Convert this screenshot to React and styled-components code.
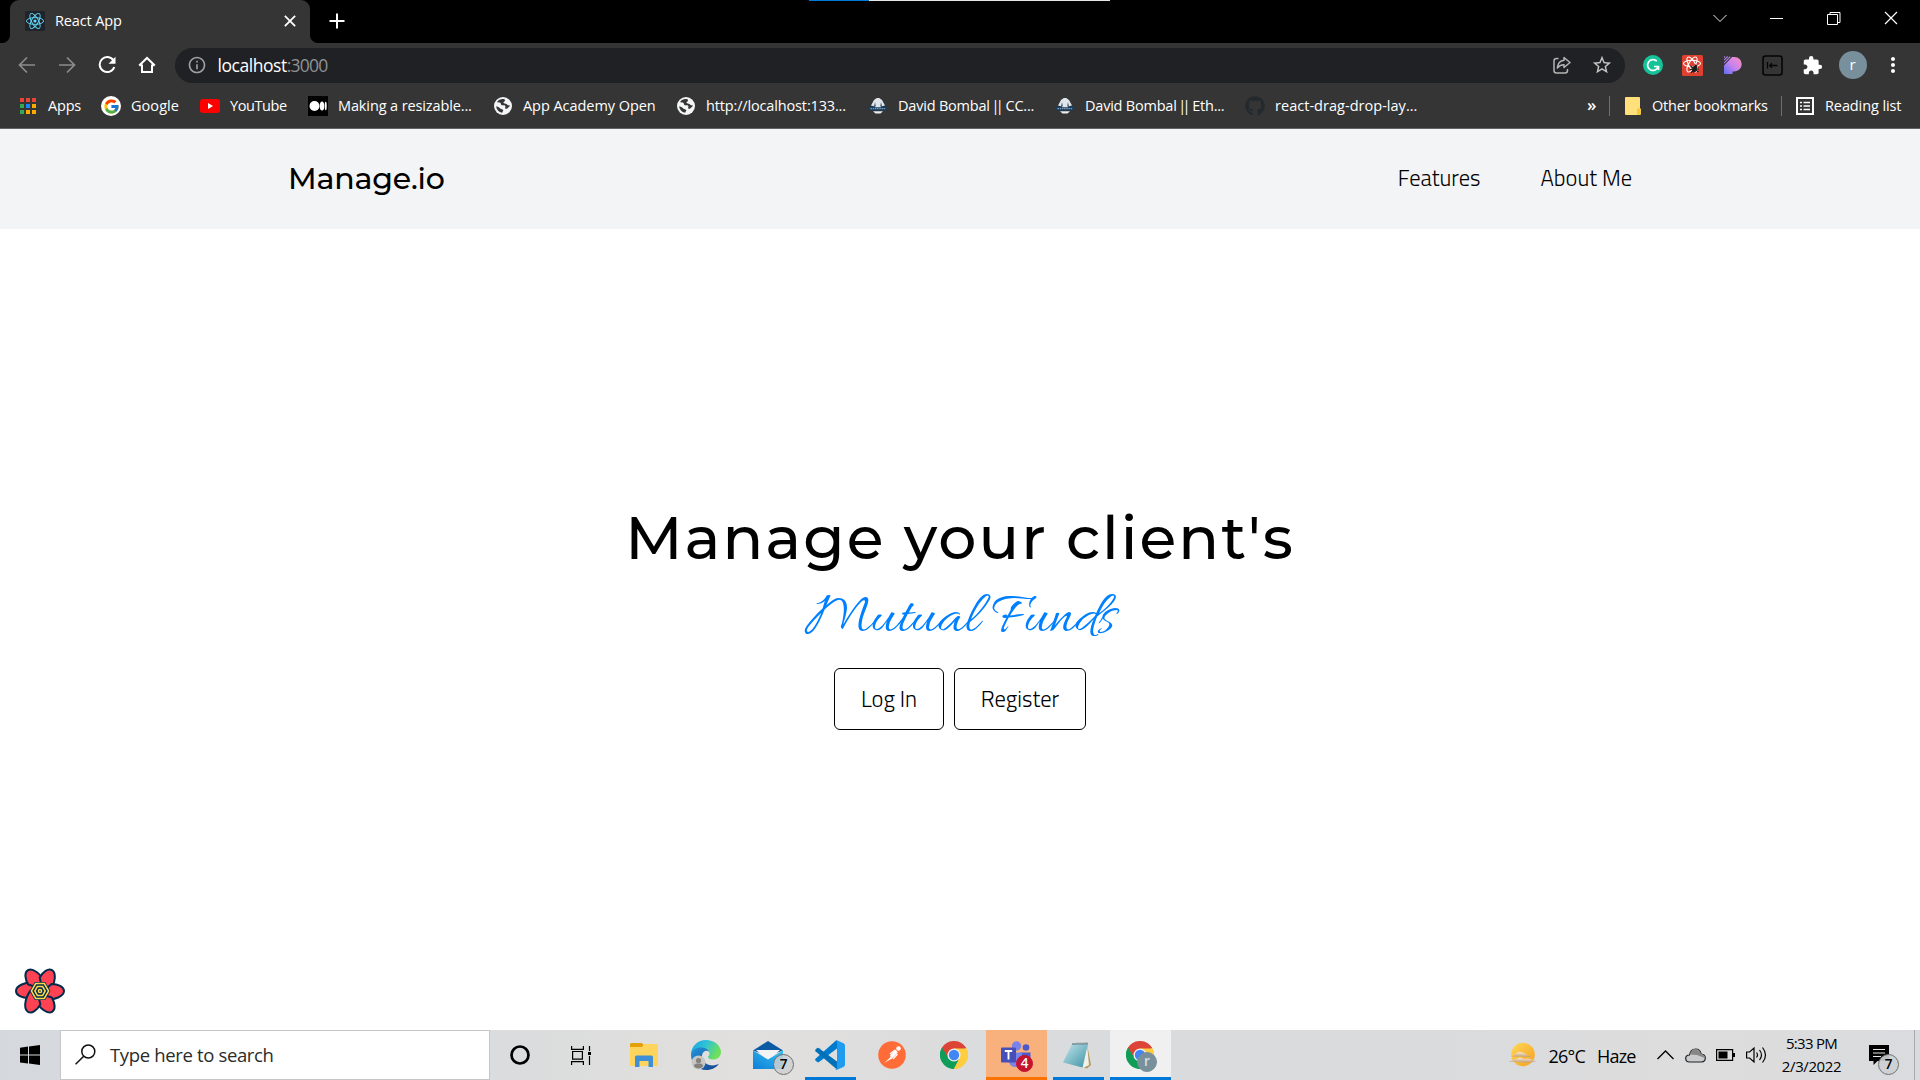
import React from "react";
import styled, { createGlobalStyle } from "styled-components";
import { FaGithub } from "react-icons/fa";
import { FcGoogle } from "react-icons/fc";
import { MdExtension, MdMoreVert, MdStarBorder, MdInfoOutline } from "react-icons/md";

const GlobalStyle = createGlobalStyle`
  * { box-sizing: border-box; }
  body { margin: 0; background: #fff; font-family: "Open Sans", "Noto Sans", sans-serif; overflow: hidden; }
  svg { display: block; flex: none; }
`;

const Screen = styled.div`
  display: flex;
  flex-direction: column;
  width: 1920px;
  height: 1080px;
  overflow: hidden;
`;

/* ---------- browser chrome ---------- */
const TabStrip = styled.div`
  position: relative;
  display: flex;
  height: 43px;
  padding-left: 2px;
  background: #000;
`;
const WindowEdge = styled.div`
  position: absolute;
  top: 0;
  left: 809px;
  width: 301px;
  height: 1px;
  background: linear-gradient(90deg, #0078d7 60px, #e6e6e3 60px);
`;
const TabFoot = styled.div`
  align-self: flex-end;
  width: 8px;
  height: 8px;
  background: radial-gradient(circle at ${(p) => (p.$right ? "100%" : "0")} 0, #000 7.5px, #353535 8.5px);
`;
const Tab = styled.div`
  display: flex;
  align-items: center;
  width: 300px;
  height: 43px;
  padding: 0 15px 1px;
  border-radius: 9px 9px 0 0;
  background: #353535;
`;
const TabTitle = styled.span`
  flex: 1;
  margin-left: 10px;
  color: #fff;
  font-size: 14.5px;
  line-height: 20px;
  letter-spacing: -0.12px;
`;
const CloseGlyph = styled.span`
  display: flex;
  margin-right: -0.5px;
`;
const NewTab = styled.div`
  display: flex;
  padding: 13px 0 0 11px;
`;
const WindowControls = styled.div`
  display: flex;
  margin-left: auto;
  padding-right: 1px;
`;
const WindowButton = styled.div`
  display: flex;
  justify-content: center;
  width: 57px;
  padding-top: 11px;
`;

const Toolbar = styled.div`
  display: flex;
  align-items: center;
  height: 45px;
  padding: 0 7.5px 1px 7px;
  background: #353535;
`;
const ToolSlot = styled.div`
  display: flex;
  align-items: center;
  justify-content: center;
  width: 40px;
  height: 35px;
  color: ${(p) => (p.$dim ? "#8c8c8c" : "#fff")};
`;
const AddressBar = styled.div`
  display: flex;
  flex: 1;
  align-items: center;
  height: 35px;
  margin: 0 7.5px 0 8px;
  padding: 0 3px 0 12px;
  border-radius: 18px;
  background: #202124;
  color: #9aa0a6;
`;
const Url = styled.span`
  flex: 1;
  margin-left: 10.5px;
  color: #8f9296;
  font-size: 17.5px;
  line-height: 24px;
  letter-spacing: -0.8px;
`;
const UrlHost = styled.span`
  color: #fff;
  letter-spacing: -0.45px;
`;
const Avatar = styled.div`
  display: flex;
  align-items: center;
  justify-content: center;
  width: 28px;
  height: 28px;
  border-radius: 50%;
  background: #78909c;
  color: #fff;
  font-size: 15px;
  line-height: 1;
  padding-bottom: 2px;
`;

const Bookmarks = styled.div`
  display: flex;
  align-items: center;
  height: 41px;
  padding: 0 18px 4px 18px;
  border-bottom: 1px solid #646464;
  background: #353535;
`;
const Bookmark = styled.div`
  display: flex;
  align-items: center;
  width: ${(p) => p.$width}px;
  color: #fff;
  font-size: 14.5px;
  line-height: 20px;
  letter-spacing: ${(p) => p.$tracking || 0}px;
  white-space: pre;
`;
const Bars = styled.span`
  margin-left: -2px;
  margin-right: 2px;
  letter-spacing: -3.7px;
`;
const BookmarkIcon = styled.div`
  display: flex;
  align-items: center;
  justify-content: center;
  width: 20px;
  height: 20px;
  margin-right: 10px;
  border-radius: ${(p) => (p.$round ? "50%" : "0")};
  background: ${(p) => p.$bg || "transparent"};
  color: #24292e;
`;
const BookmarksEnd = styled.div`
  display: flex;
  align-items: center;
  margin-left: auto;
`;
const Divider = styled.div`
  width: 1px;
  height: 20px;
  background: #6f6f6f;
`;
const Overflow = styled.span`
  width: 22px;
  color: #fff;
  font-size: 17px;
  font-weight: 600;
  line-height: 18px;
  padding-bottom: 3px;
`;
const EndItem = styled(Bookmark)`
  margin-left: ${(p) => p.$gap}px;
  svg { margin-right: 11px; }
`;

/* ---------- web page ---------- */
const SiteHeader = styled.header`
  display: flex;
  align-items: center;
  justify-content: space-between;
  height: 100px;
  padding: 0 288px;
  background: #f3f4f6;
`;
const Brand = styled.div`
  color: #000;
  font-family: Montserrat, Inter, sans-serif;
  font-size: 30px;
  font-weight: 500;
  line-height: 36px;
  letter-spacing: -0.18px;
`;
const SiteNav = styled.nav`
  display: flex;
  gap: 60px;
  padding-bottom: 2px;
`;
const NavLink = styled.a`
  color: #000;
  font-family: "Titillium Web", Roboto, sans-serif;
  font-size: 22.5px;
  font-weight: 300;
  line-height: 35px;
`;
const Hero = styled.main`
  display: flex;
  flex-direction: column;
  align-items: center;
  height: 801px;
  padding-top: 266px;
  background: #fff;
`;
const HeroTitle = styled.h1`
  margin: 0;
  color: #000;
  font-family: Montserrat, Inter, sans-serif;
  font-size: 60px;
  font-weight: 500;
  line-height: 85px;
  letter-spacing: 2.05px;
  white-space: nowrap;
`;
const HeroScript = styled.p`
  margin: 0;
  height: 60px;
  color: #0080ff;
  font-family: Allura, "Liberation Serif", serif;
  font-size: 60px;
  line-height: 80px;
  white-space: nowrap;
`;
const Actions = styled.div`
  display: flex;
  gap: 10px;
  margin-top: 28px;
`;
const Action = styled.button`
  width: ${(p) => p.$width}px;
  height: 62px;
  padding: 0;
  border: 1px solid #000;
  border-radius: 6px;
  background: #fff;
  color: #000;
  font-family: "Titillium Web", Roboto, sans-serif;
  font-size: 22.5px;
  font-weight: 300;
`;
const QueryBadge = styled.div`
  align-self: flex-start;
  margin: auto 0 16px 15px;
`;

/* ---------- taskbar ---------- */
const Taskbar = styled.footer`
  display: flex;
  height: 50px;
  background: linear-gradient(90deg, #d5d9dd 0, #dadcdd 500px, #e2e0de 750px, #dadbdd 1000px, #d9dbdd 1450px, #dedddd 1700px, #d9dbde 1920px);
  color: #000;
`;
const StartButton = styled.div`
  display: flex;
  align-items: center;
  justify-content: center;
  width: 60px;
`;
const SearchBox = styled.div`
  display: flex;
  align-items: center;
  width: 430px;
  padding: 0 14px 1px;
  border: 1px solid #c6c6c6;
  background: #fff;
  color: #2b2b2b;
  font-size: 18.5px;
  letter-spacing: -0.35px;
`;
const SearchLabel = styled.span`
  margin-left: 14px;
`;
const TaskItem = styled.div`
  position: relative;
  display: flex;
  align-items: center;
  justify-content: center;
  width: ${(p) => p.$width || 61}px;
  margin-right: ${(p) => (p.$width ? 0 : 1)}px;
  margin-left: ${(p) => p.$before || 0}px;
  padding-right: ${(p) => (p.$width ? 0 : 1.5)}px;
  background: ${(p) => p.$bg || "transparent"};

  &::after {
    content: "";
    position: absolute;
    bottom: 0;
    left: ${(p) => (p.$full ? 0 : 5)}px;
    right: ${(p) => (p.$full ? 0 : 5)}px;
    height: 3px;
    background: ${(p) => p.$line || "transparent"};
  }
`;
const CountBadge = styled.span`
  position: absolute;
  right: ${(p) => p.$right}px;
  bottom: ${(p) => p.$bottom}px;
  display: flex;
  align-items: center;
  justify-content: center;
  width: ${(p) => p.$size}px;
  height: ${(p) => p.$size}px;
  border: 1px solid ${(p) => p.$edge};
  border-radius: 50%;
  background: ${(p) => p.$fill};
  color: ${(p) => p.$ink || "#000"};
  font-size: 13.5px;
  font-weight: 600;
  line-height: 1;
`;
const Tray = styled.div`
  display: flex;
  align-items: center;
  margin-left: auto;
`;
const Temperature = styled.span`
  width: 48.5px;
  margin-left: 11.5px;
  padding-top: 2px;
  font-size: 18px;
  letter-spacing: -0.8px;
`;
const Condition = styled.span`
  width: 60px;
  padding-top: 2px;
  font-size: 18px;
  letter-spacing: -0.8px;
`;
const TrayIcons = styled.div`
  display: flex;
  align-items: center;
  gap: 10.5px;
`;
const Clock = styled.div`
  display: flex;
  flex-direction: column;
  align-items: center;
  width: 62px;
  margin-left: 14px;
  font-size: 15px;
  line-height: 23px;
`;
const ClockLine = styled.span`
  letter-spacing: ${(p) => p.$tracking}px;
`;
const Notifications = styled.div`
  position: relative;
  display: flex;
  align-items: center;
  width: 45px;
  height: 50px;
  margin-left: 26.5px;
  padding-bottom: 1px;
`;
const ShowDesktop = styled.div`
  width: 6px;
  height: 50px;
  border-left: 1px solid #a9abad;
`;

/* ---------- drawings ---------- */
const ReactLogo = () => (
  <svg width="20" height="20" viewBox="0 0 20 20">
    <rect width="20" height="20" rx="1.5" fill="#20232a" />
    <g fill="none" stroke="#61dafb" strokeWidth="0.9">
      {[0, 60, 120].map((a) => (
        <ellipse key={a} cx="10" cy="10" rx="8.6" ry="3.4" transform={`rotate(${a} 10 10)`} />
      ))}
    </g>
    <circle cx="10" cy="10" r="1.6" fill="#61dafb" />
  </svg>
);

const Cross = ({ size, width }) => (
  <svg width={size} height={size} viewBox="0 0 14 14">
    <path d="M1 1 13 13M13 1 1 13" stroke="#fff" strokeWidth={width} />
  </svg>
);

const Arrow = ({ flip }) => (
  <svg width="18" height="18" viewBox="0 0 18 18" fill="none" stroke="currentColor" strokeWidth="1.7">
    <path d={flip ? "M1 9h15M9 1.5 16.5 9 9 16.5" : "M17 9H2M9 1.5 1.5 9 9 16.5"} />
  </svg>
);

const AppsGrid = () => (
  <svg width="16" height="16" viewBox="0 0 16 16">
    {["#ea4335", "#ea4335", "#ea4335", "#34a853", "#1a85ff", "#fbab00", "#34a853", "#fbab00", "#fbab00"].map((c, i) => (
      <rect key={i} x={(i % 3) * 6} y={Math.floor(i / 3) * 6} width="4" height="4" fill={c} />
    ))}
  </svg>
);

const Globe = () => (
  <svg width="18" height="18" viewBox="0 0 18 18">
    <circle cx="9" cy="9" r="9" fill="#f4f5f6" />
    <path
      d="M10.5 2.2C8 1.4 4.3 2.5 3 5.2c1.5.2 2.3 0 3.3.6 1 .8.3 2 1.500 2.400 1.500.4 3.200-.4 3.600 1 .3.8-.6 1.500-.2 2.200.6.9 2 .1 2.900-.7.900-.9 1.800-1.400 1.700-2.400-1.500.3-2.400-.3-3.400-1.300-.8-.8-2.500-.3-2.900-1.300-.3-1 1.300-.9 1.500-1.900.1-.7-.3-1.100-.5-1.600zM2.100 9.300c.4 3.200 2.500 5.800 6 6.500.6-.8.4-1.700 1.300-2.400-.6-1.300-2-1.200-2.900-1.700-1.100-.7-1.900-2.100-4.400-2.400z"
      fill="#353535"
    />
  </svg>
);

const Knight = () => (
  <svg width="20" height="16" viewBox="0 0 20 16">
    <path d="M0 9.200 5 8h10l5 1.200-2 3.300H2z" fill="#173d60" />
    <path d="M8.800 0h2.400L14 2l3 5.500-3 .8-1-2v3H7v-3l-1 2-3-.8L6 2z" fill="#dfe5ea" />
    <path d="M7 4 6 8.500h2zM13 4 14 8.500h-2z" fill="#5a6c7a" />
    <path d="M2.500 10.700h15" stroke="#9fb0bf" strokeDasharray="1.5 .7" />
    <path d="M5 13.300h10L12.500 15.500h-5z" fill="#e8eef2" />
  </svg>
);

const Folder = () => (
  <svg width="16" height="18" viewBox="0 0 16 18">
    <path d="M0 1q0-1 1-1h13q1 0 1 1v16q0 1-1 1H1q-1 0-1-1z" fill="#ffe07a" />
    <path d="M12 12.500q0-1 1-1h3V17q0 1-1 1h-3z" fill="#f4c93f" />
  </svg>
);

const ReadingList = () => (
  <svg width="18" height="18" viewBox="0 0 18 18" fill="none" stroke="#fff">
    <rect x="1" y="1" width="16" height="16" strokeWidth="2" />
    <path d="M4 5.500h2M4 9h2M4 12.500h2M7.500 5.500h6.500M7.500 9h6.500M7.500 12.500h6.500" strokeWidth="1.7" />
  </svg>
);

const Puppet = () => (
  <svg width="21" height="21" viewBox="0 0 21 21">
    <rect width="21" height="21" rx="1.5" fill="#e0402f" />
    <g fill="none" stroke="#fff" strokeWidth="1.1">
      <ellipse cx="10" cy="8.5" rx="8.5" ry="3.3" />
      <ellipse cx="10" cy="9.5" rx="8.5" ry="3.3" transform="rotate(60 10 9.5)" />
      <ellipse cx="10" cy="9.5" rx="8.5" ry="3.3" transform="rotate(120 10 9.5)" />
    </g>
    <ellipse cx="12.5" cy="14" rx="2.3" ry="3.6" fill="#1c1c1c" transform="rotate(20 12.5 14)" />
    <path d="m8.500 11 8 6M8 14.500l9-.5M9 18l6-8M13 9.500l1.500 3" stroke="#1c1c1c" strokeWidth="1.2" />
  </svg>
);

const PurpleP = () => (
  <svg width="18" height="18" viewBox="0 0 18 18">
    <defs>
      <linearGradient id="pp" x1="1" y1="0" x2="0" y2="1">
        <stop offset="0" stopColor="#ff8fc0" />
        <stop offset=".5" stopColor="#c884ee" />
        <stop offset="1" stopColor="#5b6cf6" />
      </linearGradient>
    </defs>
    <path d="M8 1h2.500a7.200 7.200 0 0 1 0 14.400H8.500V18H0V9.500z" fill="url(#pp)" />
    <path d="M0 7.200 6.200 .7M0 4.200 3.700.5M0 1.500 1 .5" stroke="#b080ee" strokeWidth="1.1" />
  </svg>
);

const ChromeLogo = ({ size = 28 }) => (
  <svg width={size} height={size} viewBox="0 0 48 48">
    <path d="M24 24 3.200 12A24 24 0 0 1 44.800 12z" fill="#db4437" />
    <path d="M24 24 44.800 12A24 24 0 0 1 24 48z" fill="#ffcd40" />
    <path d="M24 24 24 48A24 24 0 0 1 3.200 12z" fill="#0f9d58" />
    <path d="M24 13h20.900q-1.500-2.500-3-4L24 9z" fill="#db4437" />
    <path d="M33.500 29.500 24 48q-2.500 0-4-.3L14.500 29.500z" fill="#0f9d58" />
    <path d="M14.500 29.500 3.200 12 8 6.500 24 13z" fill="#db4437" />
    <path d="M14.500 29.500 3.500 11.500Q1 16 .5 20z" fill="#0f9d58" />
    <path d="M24 13h21.200Q48 18 48 24T43 38.500L33.500 29.500z" fill="#ffcd40" />
    <path d="M33.500 29.500 24 48q9 0 15-5.300z" fill="#ffcd40" />
    <circle cx="24" cy="24" r="11.200" fill="#f1f1f1" />
    <circle cx="24" cy="24" r="8.900" fill="#4285f4" />
  </svg>
);

const QueryFlower = () => (
  <svg width="50" height="46" viewBox="0 0 50 46">
    <g fill="#ff4154" stroke="#002c4b" strokeWidth="2" strokeLinejoin="round">
      {[0, 60, 120, 180, 240, 300].map((a) => (
        <path key={a} d="M20.500 14.500C10 13.500 1 18 1 23c0 4.500 6 7 12.500 7L19 25z" transform={`rotate(${a} 25 23)`} />
      ))}
    </g>
    <path d="M19.800 14h10.400l5.200 9-5.200 9H19.800l-5.200-9z" fill="#002c4b" />
    <g fill="none" stroke="#ffd94c" strokeWidth="1.5">
      <path d="M20.700 15.600h8.600L33.600 23l-4.300 7.400h-8.600L16.400 23z" />
      <path d="M22.400 18.500h5.200l2.600 4.500-2.600 4.500h-5.200L19.800 23z" />
      <circle cx="25" cy="23" r="1.6" />
    </g>
  </svg>
);

const ExplorerIcon = () => (
  <svg width="28" height="24" viewBox="0 0 28 24">
    <path d="M0 4h12l2-3h12.500Q28 1 28 2.500V22q0 1-1 1H1q-1 0-1-1z" fill="#ffd45c" />
    <path d="M0 4h12l1.500-2L12 0H1.500Q0 0 0 1.500z" fill="#e3a008" />
    <path d="M5 24V14q0-1.500 1.500-1.500h15Q23 12.500 23 14v10h-4.500v-6h-9v6z" fill="#3e8fd6" />
  </svg>
);

const EdgeIcon = () => (
  <svg width="30" height="30" viewBox="0 0 30 30">
    <defs>
      <linearGradient id="ed1" x1="0" y1="0" x2="1" y2=".4">
        <stop offset="0" stopColor="#1a9fe0" />
        <stop offset=".5" stopColor="#2fc2d8" />
        <stop offset="1" stopColor="#6fe05a" />
      </linearGradient>
      <linearGradient id="ed2" x1="0" y1="0" x2="1" y2="1">
        <stop offset="0" stopColor="#2496dc" />
        <stop offset="1" stopColor="#123f8c" />
      </linearGradient>
    </defs>
    <path d="M0 15C0 6 7 0 15 0s15 5.500 15 12c0 5-4 7.500-8 7.500-3 0-5-1-5-2.500 0-1 1.500-1.300 1.500-3.500 0-2.500-3-5-7.500-5C5 8.500 0 12 0 15z" fill="url(#ed1)" />
    <path d="M0 15C0 10 5 7.500 10 7.500c4 0 7 2 8 4-4-2-7 1-7 5 0 5 5 9 10.500 9 3 0 5.500-1.200 6.500-2-2.500 4-7 6.500-13 6.500C6.500 30 0 23 0 15z" fill="url(#ed2)" />
    <circle cx="7.500" cy="22.500" r="7" fill="#c9c7c3" />
    <circle cx="7.500" cy="20.500" r="2.600" fill="#85817d" />
    <path d="M3 26.500q0-3 3-3h3q3 0 3 3-2 2-4.500 2T3 26.500z" fill="#85817d" />
  </svg>
);

const MailIcon = () => (
  <svg width="30" height="28" viewBox="0 0 30 28">
    <defs>
      <linearGradient id="ml" x1="1" y1="0" x2="0" y2="1">
        <stop offset="0" stopColor="#35c1f1" />
        <stop offset="1" stopColor="#0f7fd8" />
      </linearGradient>
    </defs>
    <path d="M0 9.500 15 0l15 9.500L15 15z" fill="#0c59a4" />
    <path d="M3 9h24L15 20z" fill="#f3f3f3" />
    <path d="M0 9.500 15 18.500 30 9.500V28H0z" fill="url(#ml)" />
  </svg>
);

const VscodeIcon = () => (
  <svg width="30" height="30" viewBox="0 0 30 30">
    <path d="M22 1v7.500L4 22q-1 .6-1.800 0L.5 20.500q-.8-1 0-1.800L21 .5z" fill="#007acc" />
    <path d="M.5 9.500 2.200 8Q3 7.500 4 8.200L22 21.500V29.500L.5 11.300q-.7-1 0-1.800z" fill="#0070b8" />
    <path d="M22 .3 28.500 3.200Q30 4 30 5.500v19q0 1.600-1.500 2.400L22 29.800q-1.500.4-2-.5 2 .5 2-1.500V2.200q0-2-2-1.500.5-.8 2-.4z" fill="#1f9cf0" />
  </svg>
);

const PostmanIcon = () => (
  <svg width="28" height="28" viewBox="0 0 28 28">
    <circle cx="14" cy="14" r="13.8" fill="#ff6c37" />
    <circle cx="20.5" cy="7.5" r="2.3" fill="#fff" />
    <path d="M17.500 8.500 19.800 11.500 14 17.500 6 22l6.500-5.700-.5-1.800z" fill="#fff" />
    <path d="m12 13 5-4M15 18l4.500-5" stroke="#fff" strokeWidth="1.2" />
  </svg>
);

const TeamsIcon = () => (
  <svg width="30" height="28" viewBox="0 0 30 28">
    <circle cx="15.5" cy="5" r="4.7" fill="#7b83eb" />
    <circle cx="25" cy="6.5" r="3.3" fill="#5059c9" />
    <path d="M19 11.500h10.500V19q-1 4-5 4H19z" fill="#5059c9" />
    <path d="M9 11.500h12V20q-1 6-6.500 6T8 21z" fill="#7b83eb" />
    <rect y="6.5" width="15" height="15" rx="1" fill="#464eb8" />
    <path d="M3.800 10h7.400M7.500 10v8.500" stroke="#fff" strokeWidth="1.9" />
  </svg>
);

const NotepadIcon = () => (
  <svg width="29" height="27" viewBox="0 0 29 27">
    <defs>
      <linearGradient id="np" x1="0" y1="0" x2="1" y2="1">
        <stop offset="0" stopColor="#c5e6ec" />
        <stop offset="1" stopColor="#3d93a6" />
      </linearGradient>
    </defs>
    <path d="M24 2 28 23l-4 3.500-3-1z" fill="#b59a5b" />
    <path d="M24 2 26 23l-6 3z" fill="#f1f1ea" />
    <path d="M9 2 25 1.500 19.500 25.500 0 20.500z" fill="url(#np)" />
    <path d="M9.500 2 25 1.500" stroke="#54656b" strokeWidth="2" strokeDasharray="1 1" />
  </svg>
);

const SunHaze = () => (
  <svg width="29" height="26" viewBox="0 0 29 26">
    <defs>
      <linearGradient id="sun" x1="0" y1="0" x2="1" y2="1">
        <stop offset="0" stopColor="#ffd85a" />
        <stop offset="1" stopColor="#f7a01d" />
      </linearGradient>
      <linearGradient id="haze" x1="0" y1="0" x2="0" y2="1">
        <stop offset="0" stopColor="#f8ead2" />
        <stop offset="1" stopColor="#c29e78" />
      </linearGradient>
    </defs>
    <circle cx="15" cy="12.5" r="11.8" fill="url(#sun)" />
    <path d="M3 14.500q3-.2 4-2 3-3.500 7-2 4 .5 5 3 3-.3 5 1.500z" fill="url(#haze)" />
    <path d="M0 19.500q5-.7 8-2.500 4-3 8 0 6-1.500 9 1.500l4 .5q-5 2-14 1.500z" fill="url(#haze)" />
  </svg>
);

const places = [
  { label: "Google", width: 99, icon: <FcGoogle size={17} />, bg: "#fff", round: true, tracking: 0.05 },
  {
    label: "YouTube", width: 108, tracking: -0.4,
    icon: <svg width="20" height="14" viewBox="0 0 20 14"><rect width="20" height="14" rx="3" fill="#f00" /><path d="m8 4 5 3-5 3z" fill="#fff" /></svg>,
  },
  {
    label: "Making a resizable...", width: 185, bg: "#000", tracking: -0.12,
    icon: <svg width="20" height="20" viewBox="0 0 20 20" fill="#fff"><circle cx="6.5" cy="10" r="5" /><ellipse cx="14" cy="10" rx="2.2" ry="4.6" /><ellipse cx="17.700" cy="10" rx="1" ry="4.2" /></svg>,
  },
  { label: "App Academy Open", width: 183, icon: <Globe />, tracking: -0.05 },
  { label: "http://localhost:133...", width: 192, icon: <Globe />, tracking: -0.15 },
  { label: "David Bombal ", bars: true, rest: " CC...", width: 187, icon: <Knight />, tracking: -0.2 },
  { label: "David Bombal ", bars: true, rest: " Eth...", width: 190, icon: <Knight />, tracking: -0.22 },
  { label: "react-drag-drop-lay...", width: 180, icon: <FaGithub size={20} />, tracking: 0.03 },
];

export default function App() {
  return (
    <Screen>
      <GlobalStyle />
      <TabStrip>
        <WindowEdge />
        <TabFoot />
        <Tab>
          <ReactLogo />
          <TabTitle>React App</TabTitle>
          <CloseGlyph><Cross size={12} width={2.1} /></CloseGlyph>
        </Tab>
        <TabFoot $right />
        <NewTab>
          <svg width="16" height="16" viewBox="0 0 16 16"><path d="M8 .5v15M.5 8h15" stroke="#fff" strokeWidth="2" /></svg>
        </NewTab>
        <WindowControls>
          <WindowButton>
            <svg width="14" height="14" viewBox="0 0 14 14" fill="none" stroke="#eee"><path d="M.5 4 7 10.500 13.500 4" /></svg>
          </WindowButton>
          <WindowButton>
            <svg width="13" height="14" viewBox="0 0 13 14"><path d="M0 7.500h13" stroke="#fff" /></svg>
          </WindowButton>
          <WindowButton>
            <svg width="14" height="14" viewBox="0 0 14 14" fill="none" stroke="#fff"><path d="M.500 3.500h10v10H.500zM3 3.500V1.500h10v10h-2.500" /></svg>
          </WindowButton>
          <WindowButton><Cross size={14} width={1.2} /></WindowButton>
        </WindowControls>
      </TabStrip>

      <Toolbar>
        <ToolSlot $dim><Arrow /></ToolSlot>
        <ToolSlot $dim><Arrow flip /></ToolSlot>
        <ToolSlot>
          <svg width="18" height="18" viewBox="0 0 18 18" fill="none">
            <path d="M15.500 4.500A7.500 7.500 0 1 0 16.300 11" stroke="#fff" strokeWidth="2" />
            <path d="M17.500.8v7h-7z" fill="#fff" />
          </svg>
        </ToolSlot>
        <ToolSlot>
          <svg width="18" height="18" viewBox="0 0 18 18" fill="none" stroke="#fff" strokeWidth="2">
            <path d="M4 8.500V16h10V8.500M1.200 9.500 9 2l7.800 7.500M1.500 9.200H4M14 9.200h2.500" />
          </svg>
        </ToolSlot>
        <AddressBar>
          <MdInfoOutline size={20} />
          <Url><UrlHost>localhost</UrlHost>:3000</Url>
          <ToolSlot $dim>
            <svg width="18" height="18" viewBox="0 0 18 18" fill="none" stroke="#b4b4b4" strokeWidth="1.5">
              <path d="M5.500 2.500H3.500Q1 2.500 1 5v9.500Q1 17 3.500 17h8.500q2.500 0 2.500-2.500V13" />
              <path d="M11 1.500 17 6.500l-6 5V8.700Q7 8.500 4.300 12 5 5 11 4.300z" strokeLinejoin="round" />
            </svg>
          </ToolSlot>
          <ToolSlot $dim><MdStarBorder size={22} color="#c4c4c4" /></ToolSlot>
        </AddressBar>
        <ToolSlot>
          <svg width="20" height="20" viewBox="0 0 20 20" fill="none">
            <circle cx="10" cy="10" r="10" fill="#15c39a" />
            <path d="M13.800 6.200A5.400 5.400 0 1 0 15.200 11.500M11 11.500h4.500v3.500" stroke="#fff" strokeWidth="1.7" />
          </svg>
        </ToolSlot>
        <ToolSlot><Puppet /></ToolSlot>
        <ToolSlot><PurpleP /></ToolSlot>
        <ToolSlot>
          <svg width="21" height="21" viewBox="0 0 21 21" fill="none" stroke="#050505">
            <rect x="1" y="1" width="19" height="19" rx="2.5" strokeWidth="1.6" />
            <path d="M5.500 7v6.500M7.500 10.500h8M10 8.200 7.700 10.500 10 12.800" strokeWidth="1.3" />
          </svg>
        </ToolSlot>
        <ToolSlot><MdExtension size={21} /></ToolSlot>
        <ToolSlot><Avatar>r</Avatar></ToolSlot>
        <ToolSlot><MdMoreVert size={24} /></ToolSlot>
      </Toolbar>

      <Bookmarks>
        <Bookmark $width={83} $tracking={-0.2}>
          <BookmarkIcon><AppsGrid /></BookmarkIcon>Apps
        </Bookmark>
        {places.map((p) => (
          <Bookmark key={p.label + (p.rest || "")} $width={p.width} $tracking={p.tracking}>
            <BookmarkIcon $bg={p.bg} $round={p.round}>{p.icon}</BookmarkIcon>
            <span>{p.label}{p.bars && <Bars>||</Bars>}{p.rest}</span>
          </Bookmark>
        ))}
        <BookmarksEnd>
          <Overflow>»</Overflow>
          <Divider />
          <EndItem $gap={15} $width={156} $tracking={-0.22}><Folder />Other bookmarks</EndItem>
          <Divider />
          <EndItem $gap={14} $width={106} $tracking={-0.1}><ReadingList />Reading list</EndItem>
        </BookmarksEnd>
      </Bookmarks>

      <SiteHeader>
        <Brand>Manage.io</Brand>
        <SiteNav>
          <NavLink>Features</NavLink>
          <NavLink>About Me</NavLink>
        </SiteNav>
      </SiteHeader>

      <Hero>
        <HeroTitle>Manage your client's</HeroTitle>
        <HeroScript>Mutual Funds</HeroScript>
        <Actions>
          <Action $width={110}>Log In</Action>
          <Action $width={132}>Register</Action>
        </Actions>
        <QueryBadge><QueryFlower /></QueryBadge>
      </Hero>

      <Taskbar>
        <StartButton>
          <svg width="20" height="20" viewBox="0 0 20 20"><path d="M0 2.700 8 1.600v7.900H0zM9 1.400 20 0v9.500H9zM0 10.500h8v8L0 17.400zM9 10.500h11V20L9 18.600z" /></svg>
        </StartButton>
        <SearchBox>
          <svg width="21" height="21" viewBox="0 0 21 21" fill="none" stroke="#111" strokeWidth="1.5"><circle cx="13.3" cy="7.5" r="6.5" /><path d="M8.700 12.200.600 20.300" /></svg>
          <SearchLabel>Type here to search</SearchLabel>
        </SearchBox>
        <TaskItem $width={60}>
          <svg width="20" height="20" viewBox="0 0 20 20"><circle cx="10" cy="10" r="8.5" fill="none" stroke="#000" strokeWidth="2.7" /></svg>
        </TaskItem>
        <TaskItem $width={61}>
          <svg width="20" height="19" viewBox="0 0 20 19" fill="none" stroke="#000" strokeWidth="1.2">
            <path d="M.600 0v3.400h11.800V0M.600 19v-3.400h11.800V19M1.600 5.500h9.800v7.700H1.600zM18.500 0v5M18.500 10v9" />
            <path d="M17 6h3v3h-3z" fill="#000" stroke="none" />
          </svg>
        </TaskItem>
        <TaskItem $before={3}><ExplorerIcon /></TaskItem>
        <TaskItem><EdgeIcon /></TaskItem>
        <TaskItem>
          <MailIcon />
          <CountBadge $right={5} $bottom={5} $size={21} $edge="#707070" $fill="rgba(205,208,210,.85)">7</CountBadge>
        </TaskItem>
        <TaskItem $line="#0078d7"><VscodeIcon /></TaskItem>
        <TaskItem><PostmanIcon /></TaskItem>
        <TaskItem><ChromeLogo /></TaskItem>
        <TaskItem $bg="#f8b07c" $line="#ff7200" $full>
          <TeamsIcon />
          <CountBadge $right={14} $bottom={8} $size={17} $edge="#c4122f" $fill="#c4122f" $ink="#fff">4</CountBadge>
        </TaskItem>
        <TaskItem $line="#0078d7"><NotepadIcon /></TaskItem>
        <TaskItem $bg="#f0f0f0" $line="#0078d7" $full>
          <ChromeLogo />
          <CountBadge $right={14} $bottom={8} $size={20} $edge="#78909c" $fill="#78909c" $ink="#d5dde1">r</CountBadge>
        </TaskItem>
        <Tray>
          <SunHaze />
          <Temperature>26°C</Temperature>
          <Condition>Haze</Condition>
          <TrayIcons>
            <svg width="17" height="10" viewBox="0 0 17 10" fill="none" stroke="#000" strokeWidth="1.3"><path d="M.500 9 8.500 1l8 8" /></svg>
            <svg width="21" height="15" viewBox="0 0 21 15"><path d="M4.500 14Q.700 14 .700 10.500T4.500 7Q5.500 1 10.500 1T16 6q4.300.3 4.300 4T16.500 14z" fill="#c9cbcd" stroke="#222" strokeWidth="1.2" /><path d="M5 6.500Q6.500 1 10.500 1T16 6Q20 6.500 20 10L12 7z" fill="#858789" /></svg>
            <svg width="19" height="12" viewBox="0 0 19 12"><path d="M.600.600h16v10.800H.600z" fill="none" stroke="#000" strokeWidth="1.2" /><path d="M2.500 2.500h9v7h-9zM17 4h2v4h-2z" /></svg>
            <svg width="21" height="18" viewBox="0 0 21 18" fill="none" stroke="#000" strokeWidth="1.2"><path d="M.600 6h3L8 2v14L3.600 12h-3zM10.500 6.500q2 2.500 0 5M13.500 4q4 5 0 10M16.500 1.500q6 7.500 0 15" /></svg>
          </TrayIcons>
          <Clock>
            <ClockLine $tracking={-0.7}>5:33 PM</ClockLine>
            <ClockLine $tracking={-0.4}>2/3/2022</ClockLine>
          </Clock>
          <Notifications>
            <svg width="20" height="20" viewBox="0 0 20 20"><path d="M0 0h20v16H8.500L4.500 20v-4H0z" /><path d="M4 4.500h12M4 8h12M4 11.500h8" stroke="#e6e6e6" strokeWidth="1.2" /></svg>
            <CountBadge $right={15} $bottom={5} $size={21} $edge="#707070" $fill="rgba(205,208,210,.92)">7</CountBadge>
          </Notifications>
          <ShowDesktop />
        </Tray>
      </Taskbar>
    </Screen>
  );
}
